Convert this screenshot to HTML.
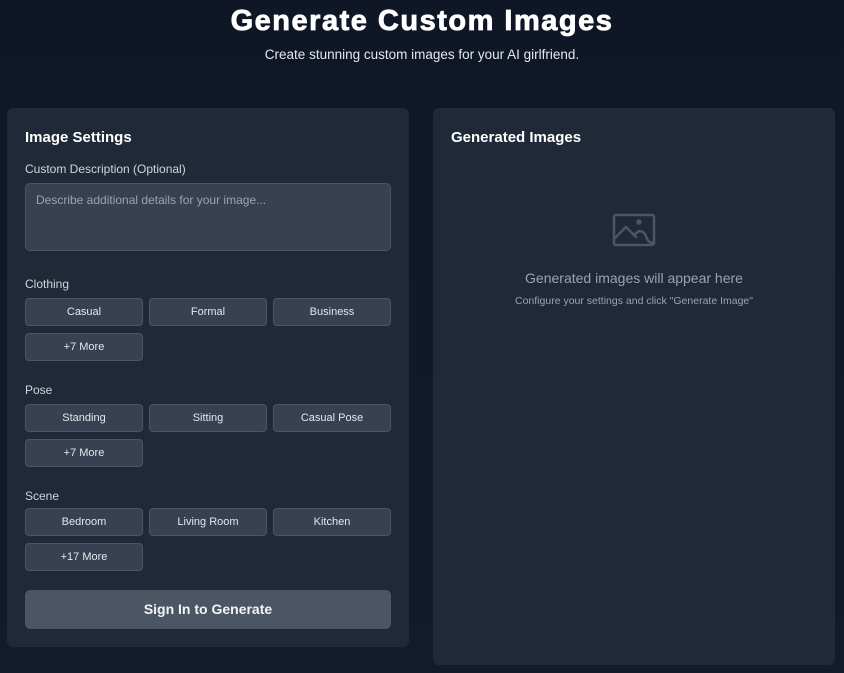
<!DOCTYPE html>
<html><head><style>
*{box-sizing:border-box;margin:0;padding:0}
body{width:844px;height:673px;background:linear-gradient(180deg,#0f1726 0%,#121b2b 100%);font-family:"Liberation Sans",Arial,sans-serif;color:#fff;position:relative;overflow:hidden}
h1{position:absolute;top:5px;left:0;width:844px;text-align:center;font-size:29px;font-weight:900;letter-spacing:1.5px;-webkit-text-stroke:0.8px #fff}
.sub{position:absolute;top:47px;left:0;width:844px;text-align:center;font-size:13.5px;color:#e5e7eb}
.panel{position:absolute;background:#1f2937;border-radius:6px}
.t{position:absolute;font-size:15px;font-weight:bold}
.lab{position:absolute;left:18px;font-size:12px;color:#d1d5db}
.ta{position:absolute;left:18px;top:75px;width:366px;height:68px;background:#374151;border:1px solid #4b5563;border-radius:5px;color:#9ca3af;font-size:12px;padding:9px 10px}
.b{position:absolute;width:118px;height:28px;background:#374151;border:1px solid #4b5563;border-radius:4px;font-size:11px;color:#e5e7eb;text-align:center;line-height:27px}
.sign{position:absolute;left:18px;top:482px;width:366px;height:39px;background:#4b5563;border-radius:5px;font-size:14px;font-weight:bold;text-align:center;line-height:39px;color:#f3f4f6}
</style></head><body>
<h1>Generate Custom Images</h1>
<div class="sub">Create stunning custom images for your AI girlfriend.</div>
<div class="panel" style="left:7px;top:108px;width:402px;height:539px">
<div class="t" style="left:18px;top:21px">Image Settings</div>
<div class="lab" style="top:54px">Custom Description (Optional)</div>
<div class="ta">Describe additional details for your image...</div>
<div class="lab" style="top:169px">Clothing</div>
<div class="b" style="left:18px;top:190px">Casual</div><div class="b" style="left:142px;top:190px">Formal</div><div class="b" style="left:266px;top:190px">Business</div>
<div class="b" style="left:18px;top:225px">+7 More</div>
<div class="lab" style="top:275px">Pose</div>
<div class="b" style="left:18px;top:296px">Standing</div><div class="b" style="left:142px;top:296px">Sitting</div><div class="b" style="left:266px;top:296px">Casual Pose</div>
<div class="b" style="left:18px;top:331px">+7 More</div>
<div class="lab" style="top:381px">Scene</div>
<div class="b" style="left:18px;top:400px">Bedroom</div><div class="b" style="left:142px;top:400px">Living Room</div><div class="b" style="left:266px;top:400px">Kitchen</div>
<div class="b" style="left:18px;top:435px">+17 More</div>
<div class="sign">Sign In to Generate</div>
</div>
<div class="panel" style="left:433px;top:108px;width:402px;height:557px">
<div class="t" style="left:18px;top:21px">Generated Images</div>
<svg style="position:absolute;left:179px;top:105px" width="44" height="34" viewBox="0 0 44 34" fill="none" stroke="#4b5563" stroke-width="2.5" stroke-linejoin="round" stroke-linecap="round"><rect x="2" y="2" width="40" height="30" rx="2"/><path d="M3 25 L14 14 L24 24 M22 22 L27 18 Q33 18 35 26 Q38 31 41 29"/><circle cx="27" cy="9" r="1.5" fill="#4b5563"/></svg>
<div style="position:absolute;left:0;width:402px;top:162px;text-align:center;font-size:14px;color:#9ca3af">Generated images will appear here</div>
<div style="position:absolute;left:0;width:402px;top:187px;text-align:center;font-size:10.5px;color:#9ca3af">Configure your settings and click "Generate Image"</div>
</div>
</body></html>
